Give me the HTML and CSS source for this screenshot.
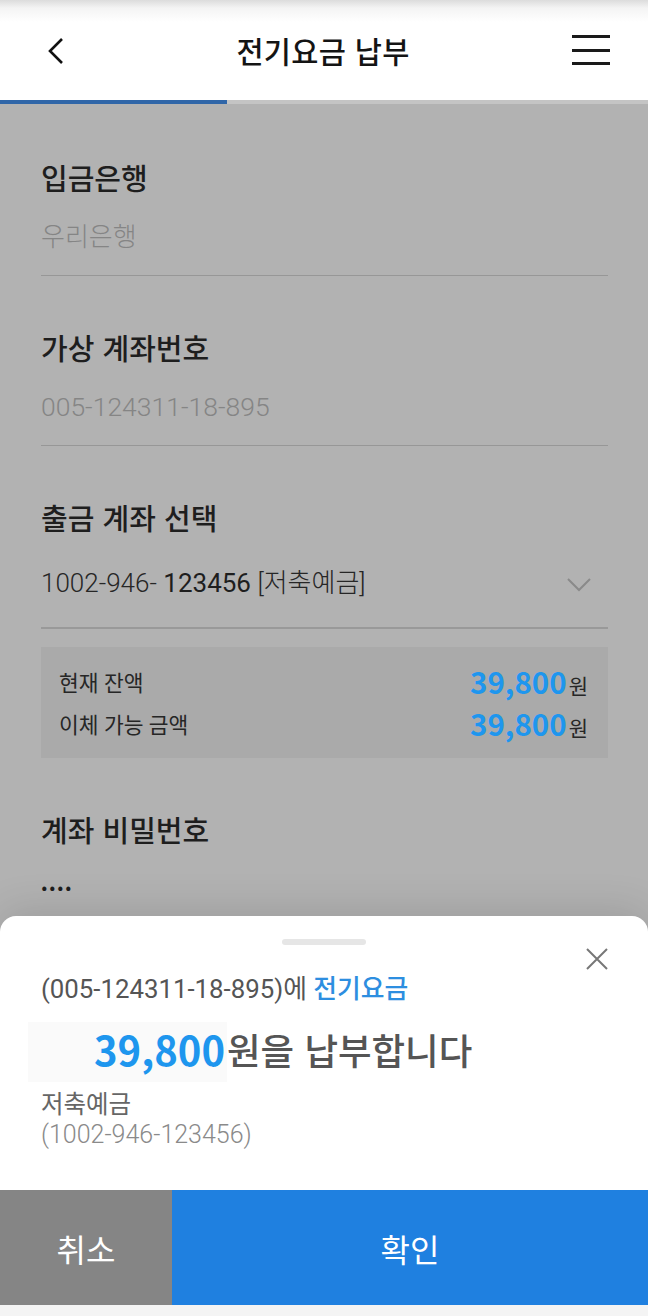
FILE: index.html
```html
<!DOCTYPE html>
<html lang="ko">
<head>
<meta charset="utf-8">
<title>전기요금 납부</title>
<link rel="stylesheet" href="styles.css">
</head>
<body>
<div class="screen">
  <header class="appbar">
    <div class="appbar-row">
      <button class="icon-btn back" aria-label="뒤로">
        <svg width="20" height="28" viewBox="0 0 20 28"><path d="M16 2 L4 14 L16 26" fill="none" stroke="#111" stroke-width="2.6"/></svg>
      </button>
      <h1 class="title">전기요금 납부</h1>
      <button class="icon-btn menu" aria-label="메뉴">
        <span></span><span></span><span></span>
      </button>
    </div>
    <div class="progress"><div class="progress-fill" style="width:227px"></div></div>
  </header>

  <main class="content">
    <section class="field">
      <h2 class="label">입금은행</h2>
      <div class="value muted">우리은행</div>
    </section>
    <section class="field">
      <h2 class="label">가상 계좌번호</h2>
      <div class="value muted digits">005-124311-18-895</div>
    </section>
    <section class="field select">
      <h2 class="label">출금 계좌 선택</h2>
      <div class="value select-row">
        <span><span class="light">1002-946-</span> 123456 <span class="light">[저축예금]</span></span>
        <svg class="chev" width="26" height="16" viewBox="0 0 26 16"><path d="M2 2 L13 13 L24 2" fill="none" stroke="#8a8a8a" stroke-width="2"/></svg>
      </div>
    </section>
    <div class="balance">
      <div class="bal-row"><span class="bal-name">현재 잔액</span><span class="bal-amt"><b>39,800</b>원</span></div>
      <div class="bal-row"><span class="bal-name">이체 가능 금액</span><span class="bal-amt"><b>39,800</b>원</span></div>
    </div>
    <section class="field pw">
      <h2 class="label">계좌 비밀번호</h2>
      <div class="dots">••••</div>
    </section>
  </main>

  <div class="sheet">
    <div class="handle"></div>
    <button class="close" aria-label="닫기">
      <svg width="24" height="24" viewBox="0 0 24 24"><path d="M2 2 L22 22 M22 2 L2 22" fill="none" stroke="#777" stroke-width="2"/></svg>
    </button>
    <div class="sheet-body">
      <p class="to">(005-124311-18-895)에 <span class="hl">전기요금</span></p>
      <div class="pay-row"><span class="amt-box">39,800</span><span class="pay-text">원을 납부합니다</span></div>
      <p class="acct">저축예금</p>
      <p class="acct num">(1002-946-123456)</p>
    </div>
    <div class="actions">
      <button class="btn cancel">취소</button>
      <button class="btn ok">확인</button>
    </div>
    <div class="navpad"></div>
  </div>
</div>
</body>
</html>
```

FILE: styles.css
```css
* { box-sizing: border-box; margin: 0; padding: 0; }
html, body { width: 648px; height: 1316px; overflow: hidden; }
body {
  font-family: Roboto, "Noto Sans CJK KR", sans-serif;
  background: #b2b2b2;
  color: #1c1c1c;
}
button { border: 0; background: none; font: inherit; cursor: pointer; }
.screen { position: relative; width: 648px; height: 1316px; }

.appbar {
  background: linear-gradient(#dcdcdc 0, #f4f4f4 8px, #ffffff 22px);
}
.appbar-row {
  height: 100px;
  display: flex;
  align-items: center;
  justify-content: space-between;
  padding: 0 38px 0 44px;
}
.icon-btn { display: flex; align-items: center; justify-content: center; }
.back { width: 24px; height: 30px; margin-top: 2px; }
.title {
  font-family: "Noto Sans CJK KR", sans-serif;
  font-size: 29.5px;
  font-weight: 500;
  color: #141414;
  letter-spacing: 0.3px;
  margin-left: 6px;
}
.menu {
  width: 38px; height: 30px;
  flex-direction: column; justify-content: space-between;
}
.menu span { display: block; width: 38px; height: 3px; background: #1a1a1a; }
.progress { height: 4px; background: #c4c4c4; }
.progress-fill { height: 4px; background: #3066a8; }

.content { padding: 55px 40px 0 41px; }
.field { border-bottom: 1px solid #979797; padding-bottom: 20px; margin-bottom: 53px; }
.label { font-family: "Noto Sans CJK KR", sans-serif; font-size: 29px; font-weight: 500; line-height: 36px; color: #1e1e1e; }
.value { margin-top: 24px; font-size: 26px; line-height: 36px; font-weight: 300; }
.value.digits { font-size: 26.5px; }
.muted { color: #858585; }
.field.select { border-bottom: 2px solid #999; padding-bottom: 26px; margin-bottom: 18px; }
.select-row { margin-top: 30px; display: flex; align-items: center; justify-content: space-between; color: #1e1e1e; padding-right: 16px; font-size: 26px; font-weight: 400; }
.select-row .light { font-weight: 300; color: #262626; }
.chev { margin-top: 4px; }
.balance {
  background: #aaaaaa;
  padding: 17px 20px 18px 18px;
  display: flex; flex-direction: column; gap: 8px;
  margin-bottom: 53px;
}
.bal-row { display: flex; justify-content: space-between; align-items: center; height: 34px; }
.bal-name { font-size: 21.5px; color: #262626; }
.bal-amt { font-size: 21px; color: #262626; }
.bal-amt b { font-family: "Noto Sans CJK KR", sans-serif; font-size: 29.5px; font-weight: 700; color: #1e96ee; margin-right: 2px; }
.field.pw { border: 0; }
.dots { margin-top: 28px; font-size: 18px; line-height: 30px; font-weight: 700; letter-spacing: 1.5px; color: #1e1e1e; }

.sheet {
  position: absolute; left: 0; right: 0; top: 916px; bottom: 0;
  background: #fff;
  border-radius: 16px 16px 0 0;
  box-shadow: 0 -6px 40px rgba(0,0,0,0.12);
  display: flex; flex-direction: column;
}
.handle { width: 84px; height: 6px; border-radius: 3px; background: #e6e6e6; margin: 23px auto 0; }
.close { position: absolute; top: 31px; right: 39px; width: 24px; height: 24px; }
.sheet-body { padding: 0 40px 0 41px; flex: 1; }
.to { margin-top: 29px; font-size: 25.8px; line-height: 30px; color: #555; }
.hl { color: #2d8ee0; font-weight: 500; }
.pay-row { margin: 18px 0 0 -13px; display: flex; align-items: center; height: 60px; }
.amt-box {
  width: 199px; height: 60px; background: #fafafa;
  display: flex; align-items: center; justify-content: flex-end;
  font-family: "Noto Sans CJK KR", sans-serif;
  font-size: 40px; font-weight: 700; color: #1e96ee; padding: 0 2px 6px 0;
}
.pay-text { font-family: "Noto Sans CJK KR", sans-serif; font-size: 36.5px; font-weight: 500; color: #555; padding-bottom: 6px; }
.acct { font-size: 24.5px; line-height: 30px; color: #666; }
.pay-row + .acct { margin-top: 8px; }
.acct.num { color: #8a8a8a; font-weight: 300; font-size: 25px; }
.actions { display: flex; height: 115px; }
.btn { height: 115px; font-size: 32px; color: #fff; }
.cancel { width: 172px; background: #858585; }
.ok { flex: 1; background: #1f80e0; }
.navpad { height: 11px; background: #f4f4f4; }
```
